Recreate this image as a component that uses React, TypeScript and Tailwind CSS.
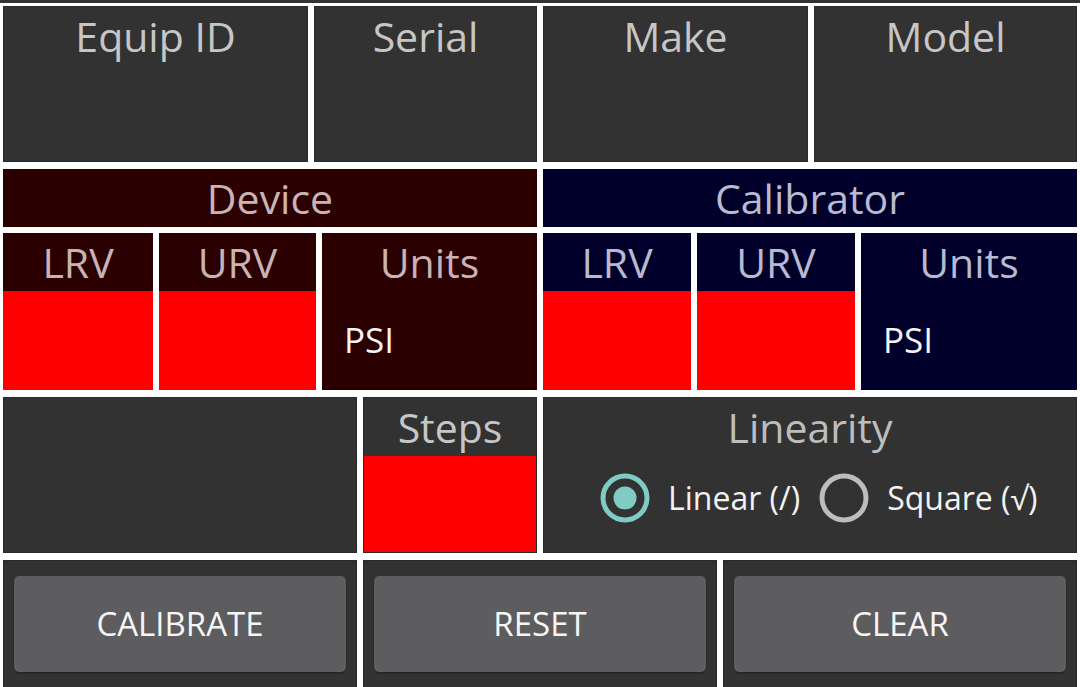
import React from 'react'

const gray = 'bg-[#323232] border border-[#2a2a2a]'

function Heading({ children, color }: { children: React.ReactNode; color: string }) {
  return <div className={`h-[58px] text-center text-[41px] leading-[58px] ${color}`}>{children}</div>
}

function ValueCell({ label, bg, color }: { label: string; bg: string; color: string }) {
  return (
    <div className={`flex flex-col ${bg}`}>
      <Heading color={color}>{label}</Heading>
      <div className="flex-1 bg-[#ff0000]" />
    </div>
  )
}

function UnitsCell({ bg, color }: { bg: string; color: string }) {
  return (
    <div className={`flex flex-col ${bg}`}>
      <Heading color={color}>Units</Heading>
      <div className="pl-[22px] pt-[27px] text-[35px] leading-[44px] text-[#f4f4f4]">PSI</div>
    </div>
  )
}

function Radio({ checked, label }: { checked: boolean; label: string }) {
  return (
    <div className="flex items-center">
      <svg width="50" height="50" viewBox="0 0 50 50">
        <circle cx="25" cy="25" r="22" fill="none" stroke={checked ? '#80cbc4' : '#bdbdbd'} strokeWidth="5" />
        {checked && <circle cx="25" cy="25" r="11.5" fill="#80cbc4" />}
      </svg>
      <span className="ml-[18px] text-[32px] leading-none text-[#f2f2f2]">{label}</span>
    </div>
  )
}

function Half({ title, bg, color }: { title: string; bg: string; color: string }) {
  const cols = title === 'Device' ? 'grid-cols-[150px_157px_215px]' : 'grid-cols-[148px_158px_216px]'
  return (
    <div className="flex flex-col gap-[6px]">
      <div className={bg}>
        <Heading color={color}>{title}</Heading>
      </div>
      <div className={`grid h-[157px] gap-[6px] ${cols}`}>
        <ValueCell label="LRV" bg={bg} color={color} />
        <ValueCell label="URV" bg={bg} color={color} />
        <UnitsCell bg={bg} color={color} />
      </div>
    </div>
  )
}

export default function App() {
  return (
    <div className="h-[687px] w-[1080px] overflow-hidden bg-white font-['Open_Sans','Noto_Sans',sans-serif]">
      <div className="h-[3px] bg-[#333333]" />
      <div className="flex flex-col gap-[7px] px-[3px] pt-[3px]">
        <div className="grid h-[156px] grid-cols-[305px_223px_265px_263px] gap-[6px]">
          {['Equip ID', 'Serial', 'Make', 'Model'].map((l) => (
            <div key={l} className={gray}>
              <Heading color="text-[#c6c6c6]">{l}</Heading>
            </div>
          ))}
        </div>

        <div className="grid h-[221px] grid-cols-2 gap-[6px]">
          <Half title="Device" bg="bg-[#2b0000]" color="text-[#c9b3b5]" />
          <Half title="Calibrator" bg="bg-[#00002a]" color="text-[#b9b9cf]" />
        </div>

        <div className="grid h-[156px] grid-cols-[354px_174px_534px] gap-[6px]">
          <div className={gray} />
          <div className={`flex flex-col ${gray}`}>
            <Heading color="text-[#c6c6c6]">Steps</Heading>
            <div className="flex-1 bg-[#ff0000]" />
          </div>
          <div className={`flex flex-col ${gray}`}>
            <Heading color="text-[#bdbdbd]">Linearity</Heading>
            <div className="flex gap-[19px] pl-[56px] pt-[17px]">
              <Radio checked label="Linear (/)" />
              <Radio checked={false} label="Square (√)" />
            </div>
          </div>
        </div>

        <div className="grid h-[140px] grid-cols-3 gap-[6px]">
          {['CALIBRATE', 'RESET', 'CLEAR'].map((l) => (
            <div key={l} className={`px-[10px] pt-[15px] ${gray}`}>
              <button className="h-[96px] w-full rounded-[5px] bg-[#5d5d5f] text-[33px] text-[#f6f6f6] shadow-[0_1px_2px_rgba(0,0,0,0.4)]">
                {l}
              </button>
            </div>
          ))}
        </div>
      </div>
    </div>
  )
}
